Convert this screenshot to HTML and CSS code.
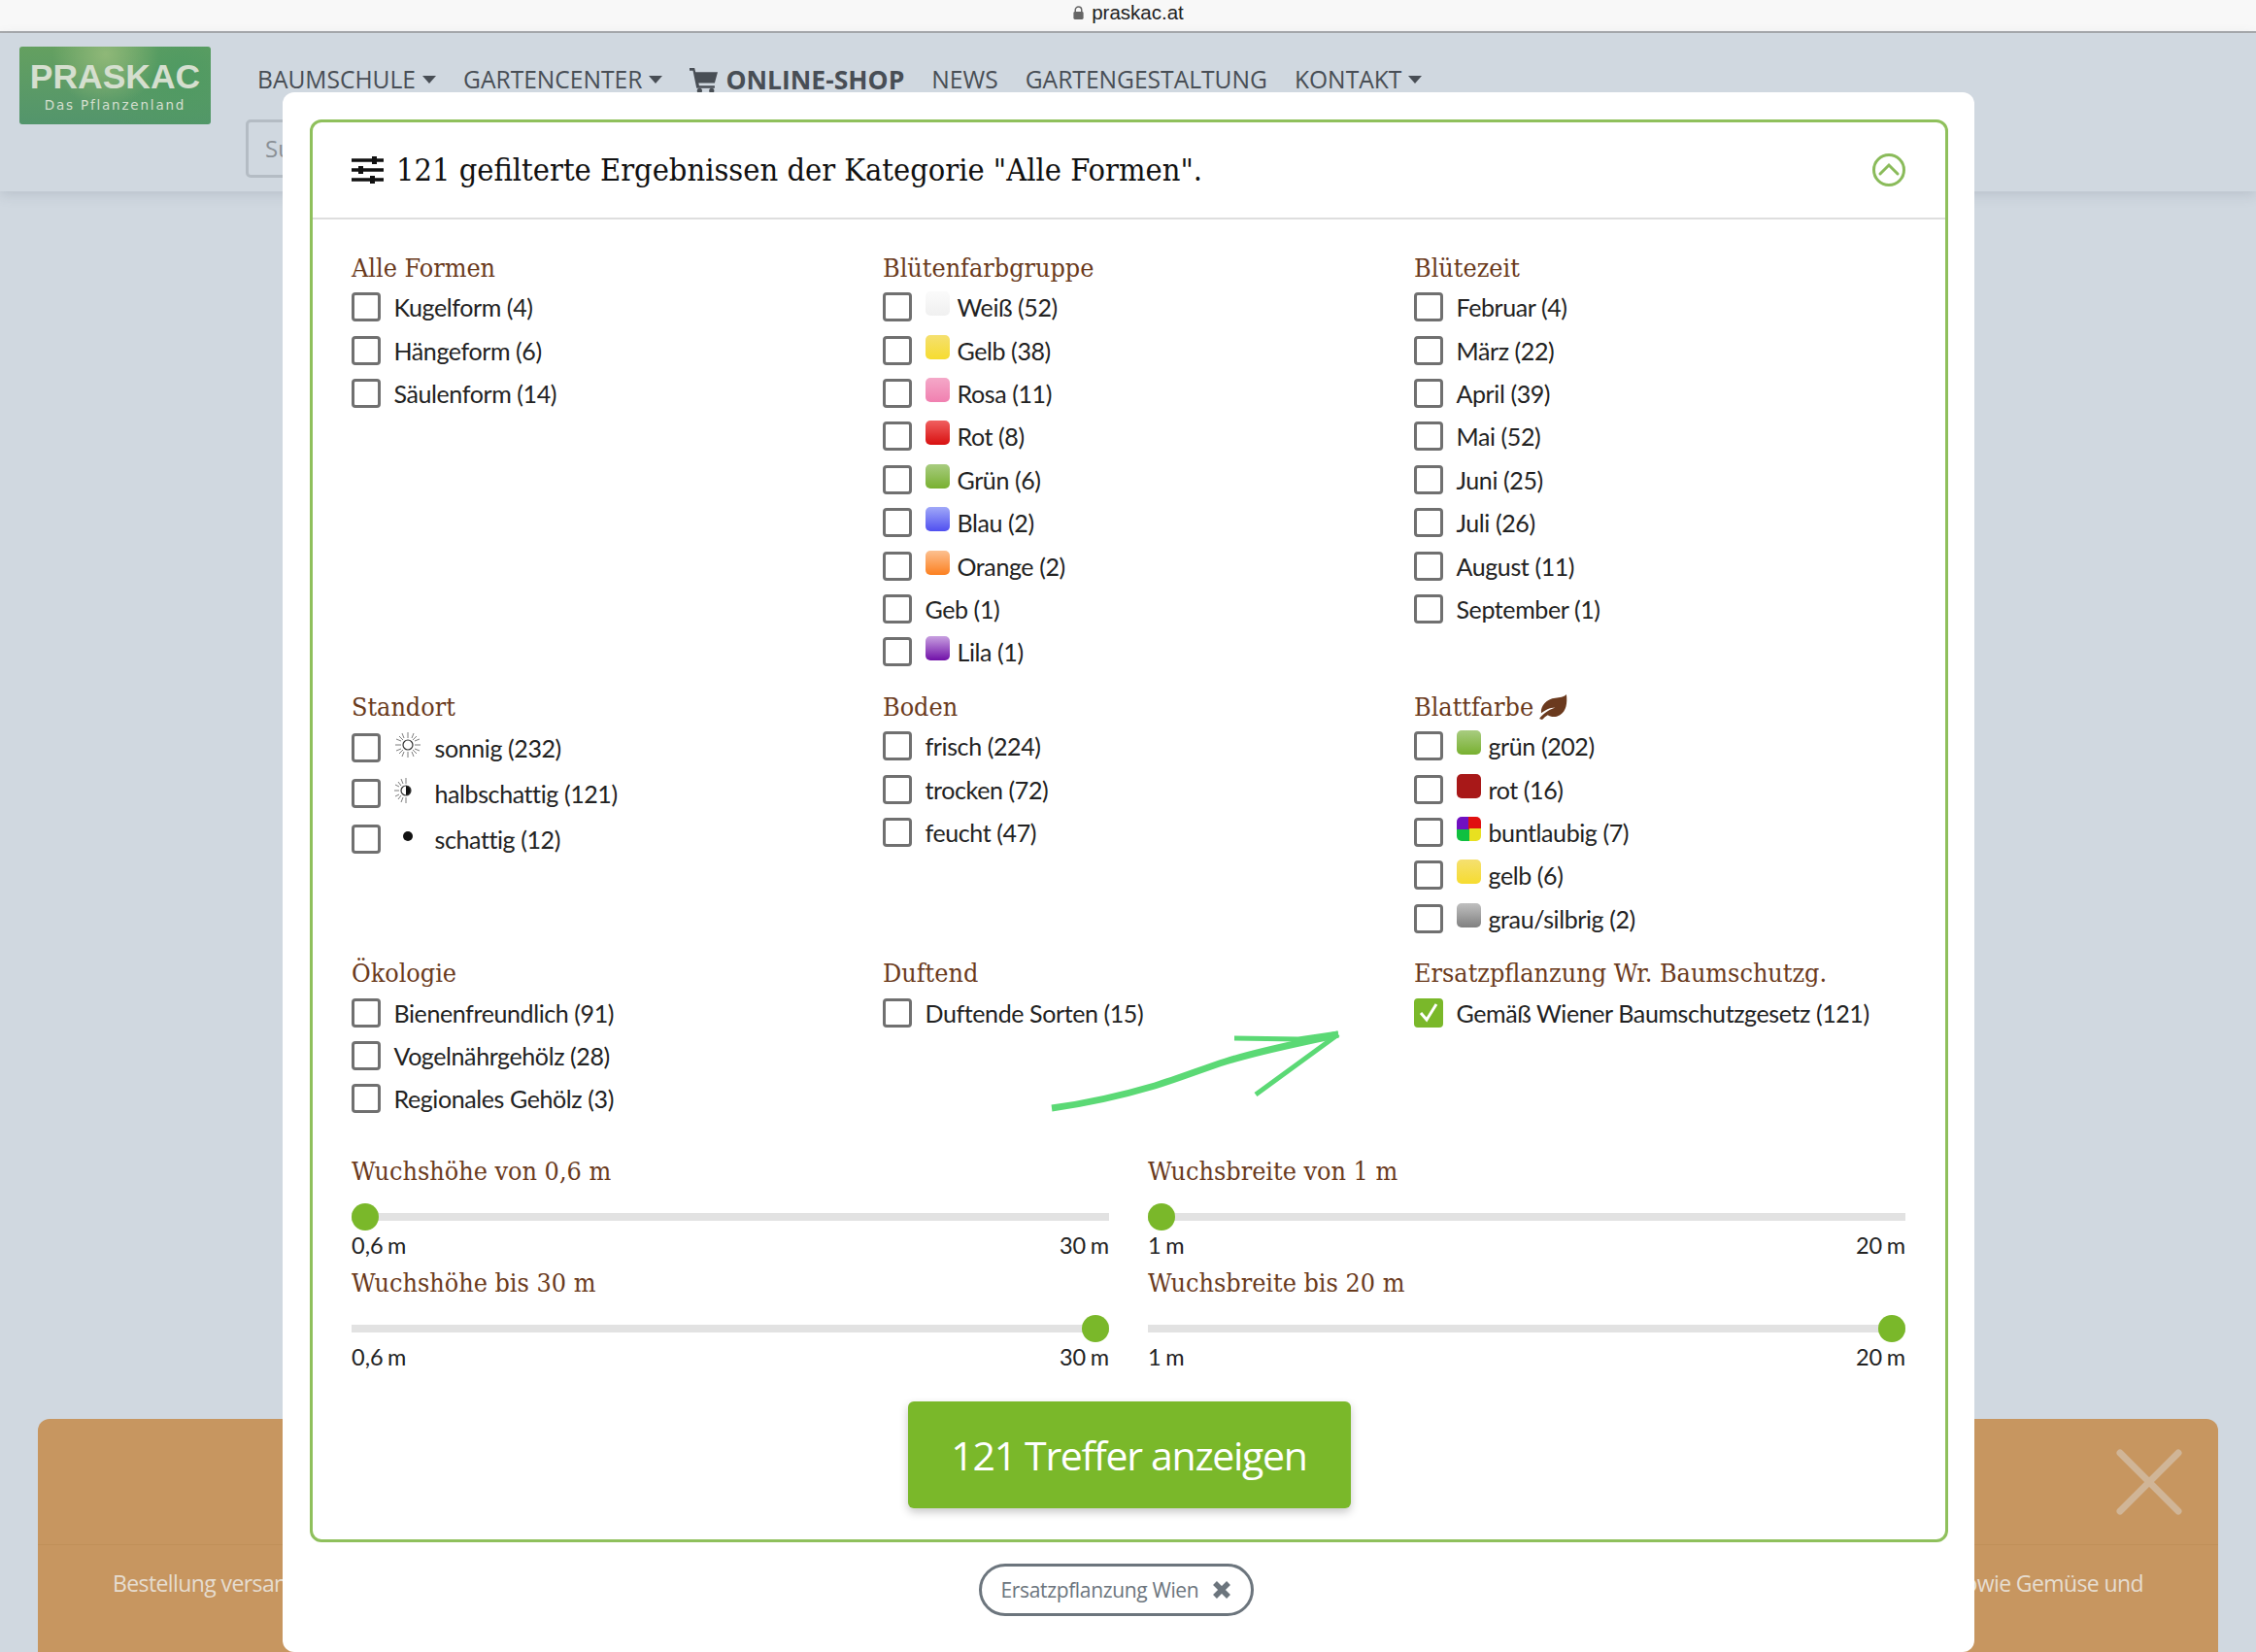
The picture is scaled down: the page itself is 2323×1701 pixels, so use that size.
FILE: index.html
```html
<!DOCTYPE html>
<html lang="de">
<head>
    <meta charset="UTF-8">
    <title>Praskac</title>
    <link rel="stylesheet" href="styles.css">
</head>
<body>
    <div class="browser-bar">
        <svg class="lock" viewBox="0 0 14 16"><path d="M3.5 7V5a3.5 3.5 0 0 1 7 0v2" fill="none" stroke="#666" stroke-width="1.6"/><rect x="1.5" y="7" width="11" height="8.5" rx="1.5" fill="#666"/></svg>
        <span>praskac.at</span>
    </div>

    <header class="site-header">
        <div class="logo">
            <span class="logo-name">PRASKAC</span>
            <span class="logo-sub">Das Pflanzenland</span>
        </div>
        <div class="header-main">
            <nav class="nav">
                <a class="caret">BAUMSCHULE</a>
                <a class="caret">GARTENCENTER</a>
                <a class="shop">
                    <svg class="cart" viewBox="0 0 28 26"><path d="M0 1h5l1 4h22l-3 11H9l.6 2.500H25v2.500H7L3.400 3.500H0z" fill="#484e55"/><circle cx="10" cy="23.500" r="2.500" fill="#484e55"/><circle cx="22" cy="23.500" r="2.500" fill="#484e55"/></svg>
                    ONLINE-SHOP
                </a>
                <a>NEWS</a>
                <a>GARTENGESTALTUNG</a>
                <a class="caret">KONTAKT</a>
            </nav>
            <div class="search">Suche</div>
        </div>
    </header>

    <div class="cookie">
        <div class="cookie-head">
            <svg class="cookie-close" viewBox="0 0 68 68"><path d="M4 4l60 60M64 4L4 64" stroke="#d0b597" stroke-width="7" stroke-linecap="round"/></svg>
        </div>
        <div class="cookie-body">
            <span>Bestellung versandfertig</span>
            <span>sowie Gemüse und</span>
        </div>
    </div>

    <div class="modal">
        <div class="filter-box">
            <div class="filter-head">
                <svg class="sliders" viewBox="0 0 33 28">
                    <path d="M0 4h33M0 14h33M0 24h33" stroke="#111" stroke-width="3.400"/>
                    <rect x="21" y="0" width="5" height="8" fill="#111"/>
                    <rect x="7" y="10" width="5" height="8" fill="#111"/>
                    <rect x="19" y="20" width="5" height="8" fill="#111"/>
                </svg>
                <h2>121 gefilterte Ergebnissen der Kategorie "Alle Formen".</h2>
                <svg class="collapse" viewBox="0 0 36 36"><circle cx="18" cy="18" r="15.500" fill="none" stroke="#8abb5a" stroke-width="3"/><path d="M9 22l9-9 9 9" fill="none" stroke="#8abb5a" stroke-width="3" stroke-linecap="round"/></svg>
            </div>

            <div class="filter-body">
                <div class="filter-grid">
                    <section>
                        <h3>Alle Formen</h3>
                        <label class="row"><span class="box"></span>Kugelform (4)</label>
                        <label class="row"><span class="box"></span>Hängeform (6)</label>
                        <label class="row"><span class="box"></span>Säulenform (14)</label>
                    </section>
                    <section>
                        <h3>Blütenfarbgruppe</h3>
                        <label class="row"><span class="box"></span><span class="swatch weiss"></span>Weiß (52)</label>
                        <label class="row"><span class="box"></span><span class="swatch gelb"></span>Gelb (38)</label>
                        <label class="row"><span class="box"></span><span class="swatch rosa"></span>Rosa (11)</label>
                        <label class="row"><span class="box"></span><span class="swatch rot"></span>Rot (8)</label>
                        <label class="row"><span class="box"></span><span class="swatch gruen"></span>Grün (6)</label>
                        <label class="row"><span class="box"></span><span class="swatch blau"></span>Blau (2)</label>
                        <label class="row"><span class="box"></span><span class="swatch orange"></span>Orange (2)</label>
                        <label class="row"><span class="box"></span>Geb (1)</label>
                        <label class="row"><span class="box"></span><span class="swatch lila"></span>Lila (1)</label>
                    </section>
                    <section>
                        <h3>Blütezeit</h3>
                        <label class="row"><span class="box"></span>Februar (4)</label>
                        <label class="row"><span class="box"></span>März (22)</label>
                        <label class="row"><span class="box"></span>April (39)</label>
                        <label class="row"><span class="box"></span>Mai (52)</label>
                        <label class="row"><span class="box"></span>Juni (25)</label>
                        <label class="row"><span class="box"></span>Juli (26)</label>
                        <label class="row"><span class="box"></span>August (11)</label>
                        <label class="row"><span class="box"></span>September (1)</label>
                    </section>

                    <section>
                        <h3>Standort</h3>
                        <label class="row tall"><span class="box"></span>
                            <svg class="light" viewBox="0 0 28 28"><circle cx="14" cy="14" r="5" fill="none" stroke="#333" stroke-width="1.200"/><path d="M14 1v6M14 21v6M1 14h6M21 14h6M5 5l4 4M19 19l4 4M23 5l-4 4M9 19l-4 4M8 2l2 5M18 21l2 5M20 2l-2 5M10 21l-2 5M2 8l5 2M21 18l5 2M2 20l5-2M21 10l5-2" stroke="#444" stroke-width=".7"/></svg>
                            sonnig (232)</label>
                        <label class="row tall"><span class="box"></span>
                            <svg class="light" viewBox="0 0 28 28"><path d="M12 9a5 5 0 0 1 0 10z" fill="#111"/><circle cx="12" cy="14" r="5" fill="none" stroke="#333" stroke-width="1.200"/><path d="M12 1v6M12 21v6M0 14h5M4 5l3 4M7 19l-3 4M7 2l2 5M9 21l-2 5M1 8l4 2M1 20l4-2" stroke="#444" stroke-width=".7"/></svg>
                            halbschattig (121)</label>
                        <label class="row tall"><span class="box"></span>
                            <svg class="light" viewBox="0 0 28 28"><circle cx="14" cy="14" r="5" fill="#111"/></svg>
                            schattig (12)</label>
                    </section>
                    <section>
                        <h3>Boden</h3>
                        <label class="row"><span class="box"></span>frisch (224)</label>
                        <label class="row"><span class="box"></span>trocken (72)</label>
                        <label class="row"><span class="box"></span>feucht (47)</label>
                    </section>
                    <section>
                        <h3>Blattfarbe
                            <svg class="leaf" viewBox="0 0 30 27"><path d="M29 0c1 9 0 18-7 22-5 3-10 2-13 0-2 1-4 3-6 5l-3-1c3-4 8-9 17-12-6 0-11 3-15 6C1 12 8 5 17 4c5-1 9-1 12-4z" fill="#6b3a1e"/></svg>
                        </h3>
                        <label class="row"><span class="box"></span><span class="swatch gruen"></span>grün (202)</label>
                        <label class="row"><span class="box"></span><span class="swatch dunkelrot"></span>rot (16)</label>
                        <label class="row"><span class="box"></span><span class="swatch bunt"></span>buntlaubig (7)</label>
                        <label class="row"><span class="box"></span><span class="swatch gelb"></span>gelb (6)</label>
                        <label class="row"><span class="box"></span><span class="swatch grau"></span>grau/silbrig (2)</label>
                    </section>

                    <section>
                        <h3>Ökologie</h3>
                        <label class="row"><span class="box"></span>Bienenfreundlich (91)</label>
                        <label class="row"><span class="box"></span>Vogelnährgehölz (28)</label>
                        <label class="row"><span class="box"></span>Regionales Gehölz (3)</label>
                    </section>
                    <section>
                        <h3>Duftend</h3>
                        <label class="row"><span class="box"></span>Duftende Sorten (15)</label>
                    </section>
                    <section>
                        <h3>Ersatzpflanzung Wr. Baumschutzg.</h3>
                        <label class="row"><span class="box checked"><svg viewBox="0 0 30 30"><path d="M7 16l6 7L23 7" fill="none" stroke="#fff" stroke-width="3"/></svg></span>Gemäß Wiener Baumschutzgesetz (121)</label>
                    </section>
                </div>

                <div class="slider-grid">
                    <div class="slider">
                        <h3>Wuchshöhe von 0,6 m</h3>
                        <div class="track"><span class="thumb"></span></div>
                        <div class="range"><span>0,6 m</span><span>30 m</span></div>
                    </div>
                    <div class="slider">
                        <h3>Wuchsbreite von 1 m</h3>
                        <div class="track"><span class="thumb"></span></div>
                        <div class="range"><span>1 m</span><span>20 m</span></div>
                    </div>
                    <div class="slider">
                        <h3>Wuchshöhe bis 30 m</h3>
                        <div class="track end"><span class="thumb"></span></div>
                        <div class="range"><span>0,6 m</span><span>30 m</span></div>
                    </div>
                    <div class="slider">
                        <h3>Wuchsbreite bis 20 m</h3>
                        <div class="track end"><span class="thumb"></span></div>
                        <div class="range"><span>1 m</span><span>20 m</span></div>
                    </div>
                </div>

                <div class="submit-wrap">
                    <button class="submit">121 Treffer anzeigen</button>
                </div>
            </div>
        </div>

        <div class="chips">
            <span class="chip">Ersatzpflanzung Wien
                <svg viewBox="0 0 20 20"><path d="M3 3l14 14M17 3L3 17" stroke="#6c757d" stroke-width="5.500"/></svg>
            </span>
        </div>

        <svg class="arrow" viewBox="0 0 310 90">
            <path d="M8 81C45 76 80 68 114 58C140 50 165 40 187 33C225 21 265 14 303 5" fill="none" stroke="#5bd975" stroke-width="7"/>
            <path d="M196 9L262 10L303 4M303 5L218 67" fill="none" stroke="#5bd975" stroke-width="5"/>
        </svg>
    </div>
</body>
</html>
```

FILE: styles.css
```css
* {
    box-sizing: border-box;
}

body {
    margin: 0;
    height: 1701px;
    overflow: hidden;
    position: relative;
    background: #d0d8e0;
    font-family: Lato, "Open Sans", sans-serif;
    color: #222;
}

h2, h3 {
    margin: 0;
    font-weight: 400;
    font-family: "DejaVu Serif Condensed", "DejaVu Serif", serif;
    font-stretch: condensed;
}

/* browser */
.browser-bar {
    height: 34px;
    background: #f8f8f8;
    border-bottom: 2px solid #a8aaad;
    display: flex;
    justify-content: center;
    align-items: center;
    gap: 7px;
    font-family: "Liberation Sans", sans-serif;
    font-size: 20.5px;
    color: #222;
    padding-bottom: 6px;
}
.lock {
    width: 13px;
    height: 16px;
}

/* page behind the dialog */
.site-header {
    height: 163px;
    display: flex;
    padding: 14px 0 0 20px;
    box-shadow: 0 4px 12px rgba(90, 100, 115, 0.18);
}
.logo {
    width: 197px;
    height: 80px;
    border-radius: 3px;
    background:
        radial-gradient(circle at 45% 10%, #8fb878 0, transparent 42%),
        radial-gradient(circle at 85% 35%, #4f9a62 0, transparent 50%),
        linear-gradient(#64a060, #53956c);
    display: flex;
    flex-direction: column;
    align-items: center;
    padding-top: 11px;
    color: #d5dfcf;
}
.logo-name {
    font-family: "Liberation Sans", sans-serif;
    font-weight: 700;
    font-size: 35.5px;
    line-height: 41px;
}
.logo-sub {
    font-family: "DejaVu Sans", sans-serif;
    font-size: 13.5px;
    line-height: 16px;
    letter-spacing: 1.8px;
}
.header-main {
    margin-left: 36px;
}
.nav {
    display: flex;
    align-items: center;
    gap: 28px;
    padding: 17px 0 0 12px;
    font-family: "Open Sans", sans-serif;
    font-size: 24.6px;
    line-height: 34px;
    color: #484e55;
}
.caret {
    display: flex;
    align-items: center;
}
.caret::after {
    content: "";
    margin-left: 7px;
    border-top: 8px solid #484e55;
    border-left: 7px solid transparent;
    border-right: 7px solid transparent;
}
.shop {
    display: flex;
    align-items: center;
    gap: 8px;
    font-weight: 700;
    font-size: 26.5px;
}
.cart {
    width: 29px;
    height: 27px;
}
.search {
    margin-top: 24px;
    width: 900px;
    height: 60px;
    border: 3px solid #b4bcc4;
    border-radius: 5px;
    padding: 0 17px;
    font-family: "Open Sans", sans-serif;
    font-size: 24px;
    line-height: 54px;
    color: #8a9096;
}

.cookie {
    position: absolute;
    left: 39px;
    right: 39px;
    top: 1461px;
    bottom: 0;
    background: #c79660;
    border-radius: 12px 12px 0 0;
    color: #e6ddd0;
    font-family: "Open Sans", sans-serif;
    font-size: 23px;
    letter-spacing: -0.6px;
}
.cookie-head {
    height: 130px;
    border-bottom: 1px solid #c09058;
    display: flex;
    justify-content: flex-end;
    align-items: center;
    padding-right: 37px;
}
.cookie-close {
    width: 68px;
    height: 68px;
}
.cookie-body {
    display: flex;
    justify-content: space-between;
    padding: 23px 77px 0;
}

/* dialog */
.modal {
    position: absolute;
    left: 291px;
    top: 95px;
    bottom: 0;
    width: 1742px;
    background: #fff;
    border-radius: 12px;
    padding: 28px 27px 0 28px;
}
.filter-box {
    border: 3px solid #8fc05c;
    border-radius: 12px;
    height: 1465px;
}
.filter-head {
    height: 100px;
    border-bottom: 2px solid #dedede;
    display: flex;
    align-items: center;
    padding: 0 40px 0 40px;
}
.sliders {
    width: 33px;
    height: 28px;
    margin-right: 13px;
}
.filter-head h2 {
    flex: 1;
    font-size: 32.3px;
    color: #111;
}
.collapse {
    width: 36px;
    height: 36px;
}
.filter-body {
    padding: 32px 40px 0 40px;
}
.filter-grid {
    display: grid;
    grid-template-columns: repeat(3, 547px);
    row-gap: 16.5px;
}
h3 {
    font-size: 26.7px;
    line-height: 36px;
    color: #6a3a1c;
    display: flex;
    align-items: center;
    gap: 6px;
}
.leaf {
    width: 29px;
    height: 26px;
}
.row {
    display: flex;
    align-items: center;
    height: 44.4px;
    font-size: 25px;
    letter-spacing: -0.4px;
    color: #222;
}
.row.tall {
    height: 47.4px;
}
.box {
    flex: none;
    width: 30px;
    height: 30px;
    margin-right: 13.5px;
    border: 3.5px solid #707070;
    border-radius: 4px;
}
.box.checked {
    background: #7ab82a;
    border-color: #7ab82a;
    padding: 0;
}
.box.checked svg {
    display: block;
    width: 30px;
    height: 30px;
    margin: -3.5px;
}
.swatch {
    flex: none;
    width: 25px;
    height: 25px;
    margin: -7px 8px 0 0;
    border-radius: 5px;
}
.weiss { background: linear-gradient(#fbfbfb, #f0f0f0); }
.gelb { background: linear-gradient(#f5e070, #f6dc30); }
.rosa { background: linear-gradient(#f4a8c8, #f080b0); }
.rot { background: linear-gradient(#f06060, #d81010); }
.gruen { background: linear-gradient(#a8cc80, #78b030); }
.blau { background: linear-gradient(#a0a8f8, #5050f0); }
.orange { background: linear-gradient(#fcc090, #fc8020); }
.lila { background: linear-gradient(#c8a0e0, #7010a8); }
.dunkelrot { background: #a81818; }
.grau { background: linear-gradient(#c0c0c0, #808080); }
.bunt { background: conic-gradient(#e01010 0 25%, #e8e020 0 50%, #10c040 0 75%, #7010c0 0); }
.light {
    flex: none;
    width: 28px;
    height: 28px;
    margin: -6px 14px 0 0;
}

.slider-grid {
    margin-top: 34px;
    display: grid;
    grid-template-columns: 780px 780px;
    column-gap: 40px;
    row-gap: 3.5px;
}
.track {
    margin: 15px 0 0;
    height: 28px;
    display: flex;
    align-items: center;
    background: linear-gradient(#e2e2e2, #e2e2e2) center / 100% 8px no-repeat;
}
.track.end {
    justify-content: flex-end;
}
.thumb {
    width: 28px;
    height: 28px;
    border-radius: 50%;
    background: #7ab82a;
}
.range {
    display: flex;
    justify-content: space-between;
    height: 33px;
    font-size: 23.5px;
    line-height: 31px;
    word-spacing: -1.5px;
    color: #222;
}

.submit-wrap {
    display: flex;
    justify-content: center;
    margin-top: 28px;
}
.submit {
    width: 456px;
    height: 110px;
    border: 0;
    border-radius: 6px;
    background: #7ab82a;
    color: #fff;
    font-family: "Open Sans", sans-serif;
    font-size: 41px;
    letter-spacing: -1.3px;
    box-shadow: 0 4px 10px rgba(0, 0, 0, 0.22);
}

.chips {
    display: flex;
    justify-content: center;
    margin-top: 22px;
    padding-right: 27px;
}
.chip {
    width: 283px;
    height: 54px;
    border: 3px solid #6c757d;
    border-radius: 27px;
    display: flex;
    align-items: center;
    justify-content: space-between;
    padding: 0 20px;
    font-family: "Open Sans", sans-serif;
    font-size: 21px;
    letter-spacing: -0.35px;
    color: #6c757d;
}
.chip svg {
    width: 20px;
    height: 20px;
}

/* hand drawn arrow on top of the screenshot */
.arrow {
    position: absolute;
    left: 784px;
    top: 965px;
    width: 310px;
    height: 90px;
    overflow: visible;
}
```
